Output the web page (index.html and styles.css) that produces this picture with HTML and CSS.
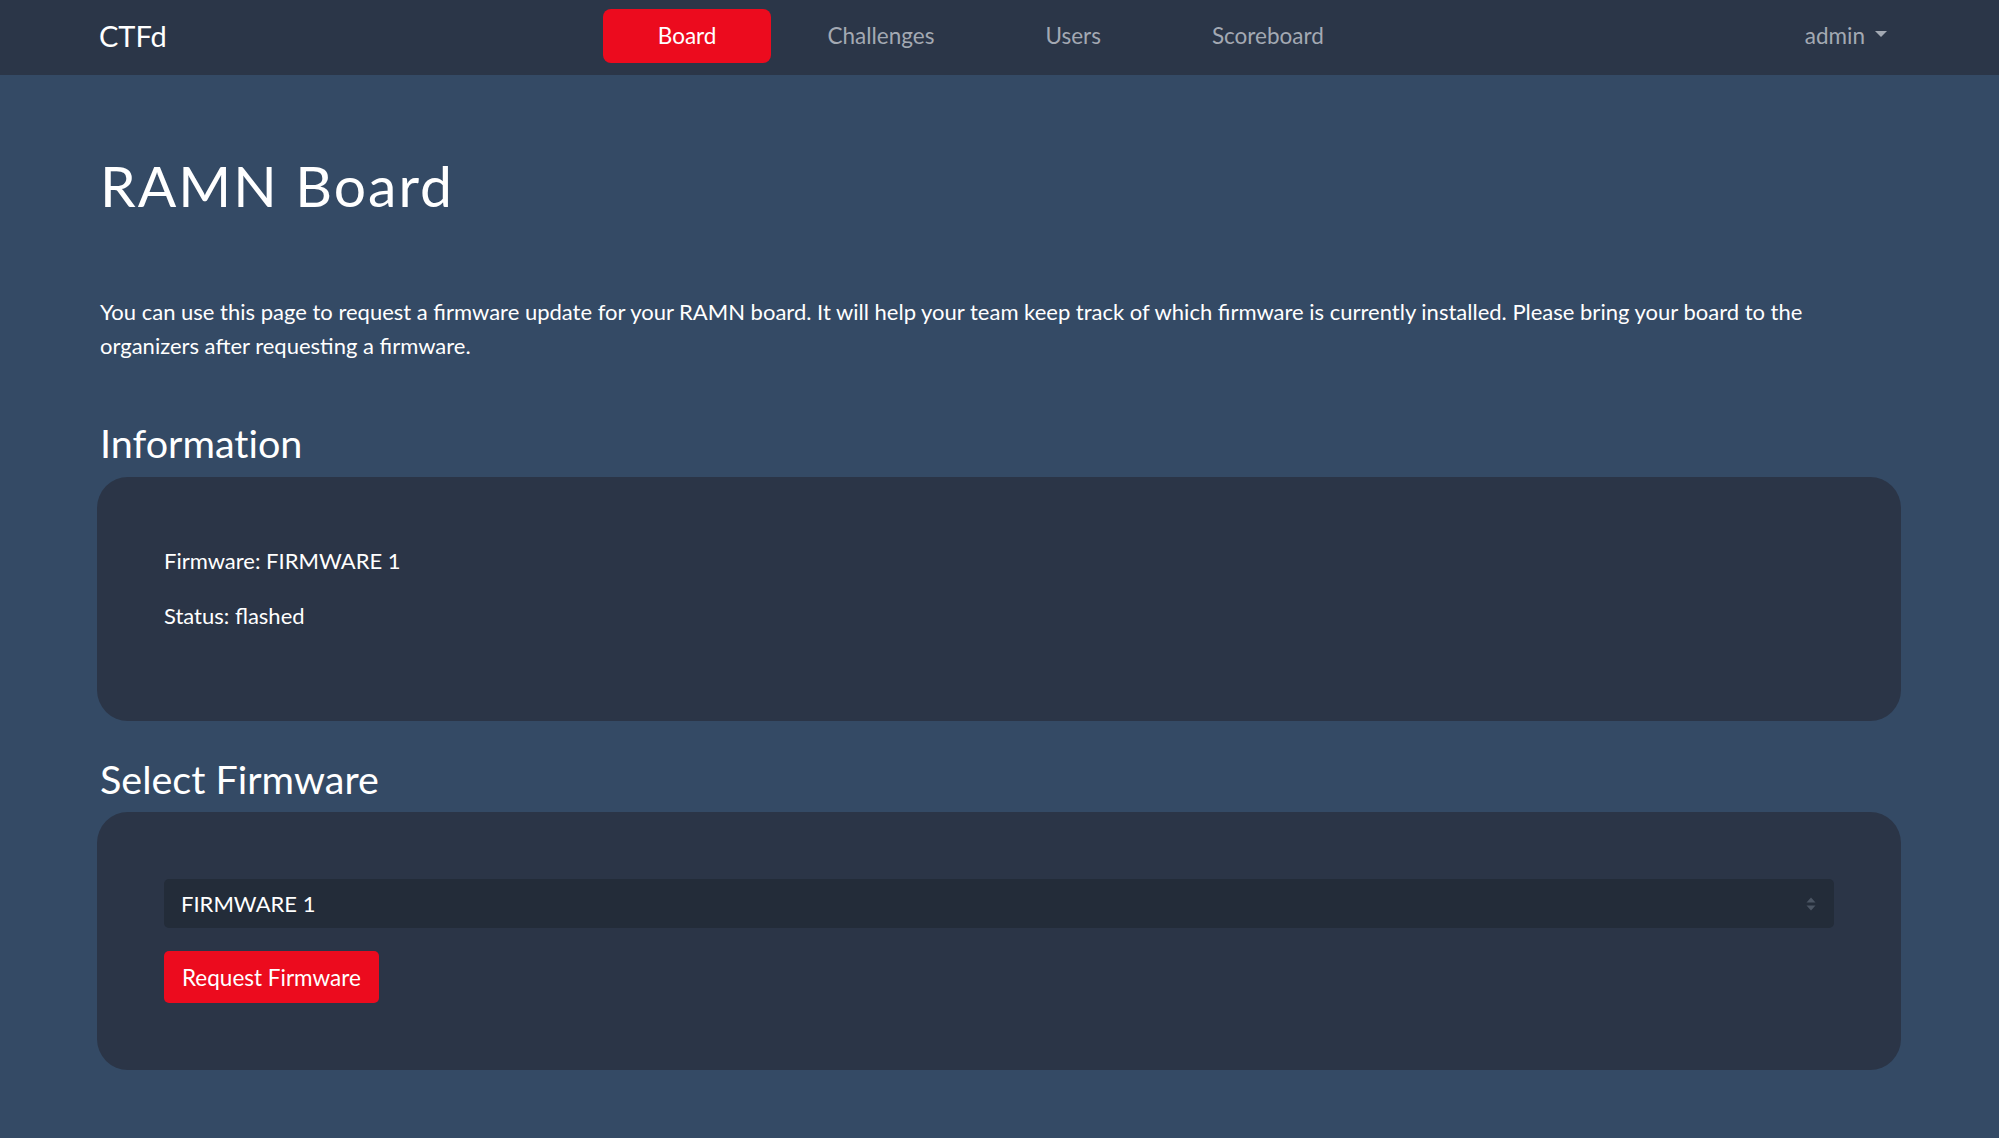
FILE: index.html
```html
<!DOCTYPE html>
<html lang="en">
<head>
<meta charset="utf-8">
<title>RAMN Board</title>
<link rel="stylesheet" href="styles.css">
</head>
<body>
<nav class="navbar">
  <a class="brand" href="#">CTFd</a>
  <ul class="nav-main">
    <li><a class="nav-link active" href="#">Board</a></li>
    <li><a class="nav-link" href="#">Challenges</a></li>
    <li><a class="nav-link" href="#">Users</a></li>
    <li><a class="nav-link" href="#">Scoreboard</a></li>
  </ul>
  <div class="nav-user">
    <a class="nav-link user-link" href="#">admin<span class="caret"></span></a>
  </div>
</nav>
<main class="container">
  <h1 class="page-title">RAMN Board</h1>
  <p class="intro">You can use this page to request a firmware update for your RAMN board. It will help your team keep track of which firmware is currently installed. Please bring your board to the organizers after requesting a firmware.</p>
  <h2 class="section-title">Information</h2>
  <section class="card">
    <p class="card-text">Firmware: FIRMWARE 1</p>
    <p class="card-text">Status: flashed</p>
  </section>
  <h2 class="section-title section-gap">Select Firmware</h2>
  <section class="card">
    <div class="select">
      <span class="select-value">FIRMWARE 1</span>
      <svg class="select-arrows" width="12" height="16" viewBox="0 0 12 16"><path d="M6 1.5 L10.5 6.5 H1.5 Z" fill="#4b5563"/><path d="M6 14.5 L10.5 9.5 H1.5 Z" fill="#4b5563"/></svg>
    </div>
    <button class="btn-request" type="button">Request Firmware</button>
  </section>
</main>
</body>
</html>
```
FILE: styles.css
```css
* { box-sizing: border-box; }
html, body { margin: 0; padding: 0; }
body {
  background: #344a65;
  color: #ffffff;
  font-family: Lato, "Open Sans", "Liberation Sans", sans-serif;
  min-height: 1138px;
}
a { text-decoration: none; }

.navbar {
  height: 75px;
  background: #2b3648;
  display: flex;
  align-items: center;
  padding: 0 98px 4px 99px;
}
.brand {
  color: #ffffff;
  font-size: 29px;
  line-height: 1;
}
.nav-main {
  list-style: none;
  margin: 0 auto;
  padding: 0 0 0 10px;
  display: flex;
  gap: 1px;
}
.nav-link {
  display: block;
  color: #a3a9b3;
  font-size: 22.5px;
  height: 54px;
  line-height: 54px;
  padding: 0 55px;
  border-radius: 8px;
}
.nav-link.active {
  background: #ec0b1e;
  color: #ffffff;
}
.user-link {
  padding: 0 14px 0 0;
  display: flex;
  align-items: center;
}
.caret {
  display: inline-block;
  margin-left: 10px;
  border-top: 6px solid #a3a9b3;
  border-left: 6px solid transparent;
  border-right: 6px solid transparent;
  margin-bottom: 3px;
}

.container {
  padding: 76px 98px 60px 97px;
}
.page-title {
  margin: 0 0 76px 3px;
  font-size: 57px;
  font-weight: 400;
  line-height: 1.2;
  letter-spacing: 2px;
}
.intro {
  margin: 0 0 56px 3px;
  font-size: 22px;
  line-height: 34px;
}
.section-title {
  margin: 0 0 10px 3px;
  font-size: 39.5px;
  font-weight: 400;
  line-height: 1.2;
  font-variant-ligatures: no-common-ligatures;
}
.section-gap { margin-top: 34px; }

.card {
  background: #2b3547;
  border-radius: 31px;
  padding: 67px;
}
.card-text {
  margin: 0 0 22px;
  font-size: 22px;
  line-height: 1.5;
}
.select {
  height: 49px;
  background: #232c39;
  border-radius: 5px;
  display: flex;
  align-items: center;
  justify-content: space-between;
  padding: 0 17px;
  font-size: 22px;
  margin-bottom: 23px;
}
.btn-request {
  display: block;
  height: 52px;
  padding: 0 18px;
  background: #ec0b1e;
  color: #ffffff;
  border: 0;
  border-radius: 5px;
  font-family: Lato, "Open Sans", "Liberation Sans", sans-serif;
  font-size: 22.5px;
}
```
